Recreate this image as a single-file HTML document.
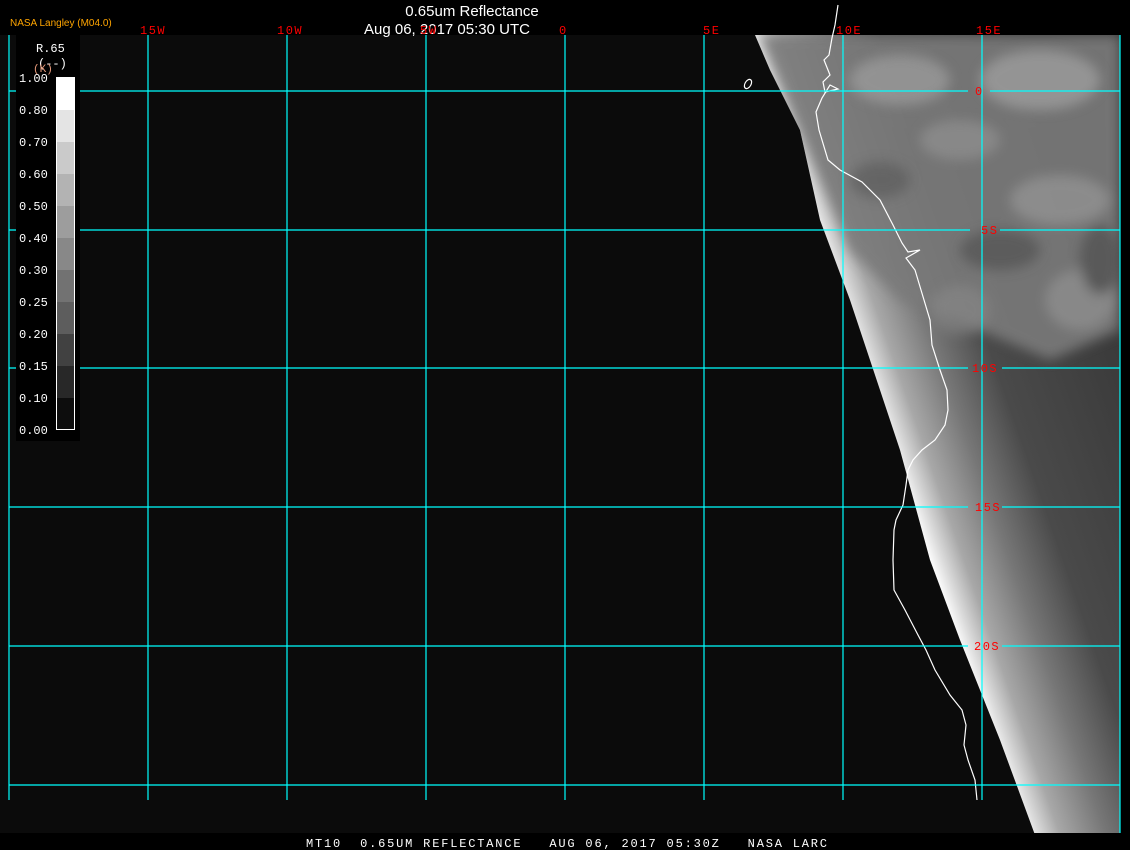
<!DOCTYPE html>
<html><head><meta charset="utf-8"><style>
html,body{margin:0;padding:0;background:#000;width:1130px;height:850px;overflow:hidden}
svg{display:block}
text{font-family:"Liberation Mono","DejaVu Sans Mono",monospace}
</style></head><body>
<svg width="1130" height="850" viewBox="0 0 1130 850" xmlns="http://www.w3.org/2000/svg">
<defs>
<linearGradient id="sw" gradientUnits="userSpaceOnUse" x1="880" y1="420" x2="1120" y2="336">
<stop offset="0" stop-color="#ffffff"/>
<stop offset="0.05" stop-color="#dcdcdc"/>
<stop offset="0.13" stop-color="#a8a8a8"/>
<stop offset="0.3" stop-color="#777"/>
<stop offset="0.5" stop-color="#4a4a4a"/>
<stop offset="1" stop-color="#3a3a3a"/>
</linearGradient>
<filter id="bl"><feGaussianBlur stdDeviation="6"/></filter>
</defs>
<rect x="0" y="35" width="1120" height="798" fill="#0b0b0b"/>
<clipPath id="cp"><polygon points="755,35 1120,35 1120,835 1035,835 1000,740 960,640 930,560 900,450 870,360 850,300 820,220 800,130 770,70"/></clipPath>
<polygon points="755,35 1120,35 1120,835 1035,835 1000,740 960,640 930,560 900,450 870,360 850,300 820,220 800,130 770,70" fill="url(#sw)"/>
<g clip-path="url(#cp)">
<polygon points="760,35 1120,35 1120,330 1050,360 980,330 900,300 850,250" fill="#7a7a7a" opacity="0.9" filter="url(#bl)"/>
<g filter="url(#bl)" opacity="0.55">
<ellipse cx="900" cy="80" rx="50" ry="25" fill="#aaa"/>
<ellipse cx="1040" cy="80" rx="60" ry="30" fill="#b0b0b0"/>
<ellipse cx="960" cy="140" rx="40" ry="20" fill="#999"/>
<ellipse cx="1060" cy="200" rx="50" ry="25" fill="#a0a0a0"/>
<ellipse cx="880" cy="180" rx="30" ry="18" fill="#555"/>
<ellipse cx="1000" cy="250" rx="40" ry="20" fill="#4a4a4a"/>
<ellipse cx="1080" cy="300" rx="35" ry="30" fill="#9a9a9a"/>
<ellipse cx="960" cy="310" rx="30" ry="25" fill="#8a8a8a"/>
<ellipse cx="1100" cy="260" rx="20" ry="35" fill="#444"/>
</g>
</g>
<!-- coastline -->
<polyline points="838,5 835,25 832,38 829,55 824,60 830,75 823,82 825,92 838,89 830,85 822,98 816,112 819,130 828,160 840,170 862,182 880,200 893,225 902,243 908,252 920,250 906,258 915,270 921,290 930,320 932,345 940,370 947,390 948,410 945,425 935,440 922,450 913,460 908,470 906,485 903,505 896,520 894,530 893,560 894,590 905,610 918,635 926,650 935,670 950,695 962,710 966,725 964,745 968,760 975,780 977,800" fill="none" stroke="#fff" stroke-width="1.2"/>
<ellipse cx="748" cy="84" rx="3" ry="5" transform="rotate(30 748 84)" fill="none" stroke="#fff" stroke-width="1.2"/>
<!-- grid -->
<g stroke="#00ffff" stroke-width="1.2">
<line x1="9" y1="35" x2="9" y2="800"/><line x1="148" y1="35" x2="148" y2="800"/><line x1="287" y1="35" x2="287" y2="800"/><line x1="426" y1="35" x2="426" y2="800"/><line x1="565" y1="35" x2="565" y2="800"/><line x1="704" y1="35" x2="704" y2="800"/><line x1="843" y1="35" x2="843" y2="800"/><line x1="982" y1="35" x2="982" y2="800"/><line x1="1120" y1="35" x2="1120" y2="835"/>
<line x1="9" y1="91" x2="968" y2="91"/><line x1="990" y1="91" x2="1120" y2="91"/>
<line x1="9" y1="230" x2="970" y2="230"/><line x1="1000" y1="230" x2="1120" y2="230"/>
<line x1="9" y1="368" x2="968" y2="368"/><line x1="1002" y1="368" x2="1120" y2="368"/>
<line x1="9" y1="507" x2="968" y2="507"/><line x1="1002" y1="507" x2="1120" y2="507"/>
<line x1="9" y1="646" x2="968" y2="646"/><line x1="1002" y1="646" x2="1120" y2="646"/>
<line x1="9" y1="785" x2="1120" y2="785"/>
</g>
<!-- legend -->
<rect x="16" y="35" width="64" height="406" fill="#000"/>
<g>
<rect x="56" y="77" width="19" height="33" fill="#fff"/>
<rect x="56" y="110" width="19" height="32" fill="#e4e4e4"/>
<rect x="56" y="142" width="19" height="32" fill="#cacaca"/>
<rect x="56" y="174" width="19" height="32" fill="#b3b3b3"/>
<rect x="56" y="206" width="19" height="32" fill="#9d9d9d"/>
<rect x="56" y="238" width="19" height="32" fill="#888"/>
<rect x="56" y="270" width="19" height="32" fill="#727272"/>
<rect x="56" y="302" width="19" height="32" fill="#5d5d5d"/>
<rect x="56" y="334" width="19" height="32" fill="#414141"/>
<rect x="56" y="366" width="19" height="32" fill="#282828"/>
<rect x="56" y="398" width="19" height="32" fill="#0d0d0d"/>
<rect x="56.5" y="77.5" width="18" height="352" fill="none" stroke="#fff" stroke-width="1"/>
</g>
<g fill="#fff" font-size="12">
<text x="36" y="52">R.65</text>
<text x="38" y="67">(--)</text>
<text x="33" y="72" fill="#e89a7a" font-size="11">(K)</text>
<text x="19" y="82">1.00</text><text x="19" y="114">0.80</text><text x="19" y="146">0.70</text><text x="19" y="178">0.60</text><text x="19" y="210">0.50</text><text x="19" y="242">0.40</text><text x="19" y="274">0.30</text><text x="19" y="306">0.25</text><text x="19" y="338">0.20</text><text x="19" y="370">0.15</text><text x="19" y="402">0.10</text><text x="19" y="434">0.00</text>
</g>
<!-- header -->
<text x="10" y="26" fill="#ffa500" font-size="10" style="font-family:'Liberation Sans',sans-serif">NASA Langley (M04.0)</text>
<text x="472" y="16" fill="#fff" font-size="15" text-anchor="middle" style="font-family:'Liberation Sans',sans-serif">0.65um Reflectance</text>
<text x="447" y="34" fill="#fff" font-size="15" text-anchor="middle" style="font-family:'Liberation Sans',sans-serif">Aug 06, 2017 05:30 UTC</text>
<g fill="#f00" font-size="12" letter-spacing="1.5">
<text x="140" y="34">15W</text><text x="277" y="34">10W</text><text x="420" y="34">5W</text><text x="559" y="34">0</text><text x="703" y="34">5E</text><text x="836" y="34">10E</text><text x="976" y="34">15E</text>
<text x="975" y="95">0</text><text x="981" y="234">5S</text><text x="972" y="372">10S</text><text x="975" y="511">15S</text><text x="974" y="650">20S</text>
</g>
<!-- footer -->
<rect x="0" y="833" width="1130" height="17" fill="#000"/>
<text x="306" y="847" fill="#fff" font-size="12" textLength="521" lengthAdjust="spacing" xml:space="preserve">MT10  0.65UM REFLECTANCE   AUG 06, 2017 05:30Z   NASA LARC</text>
</svg>
</body></html>
